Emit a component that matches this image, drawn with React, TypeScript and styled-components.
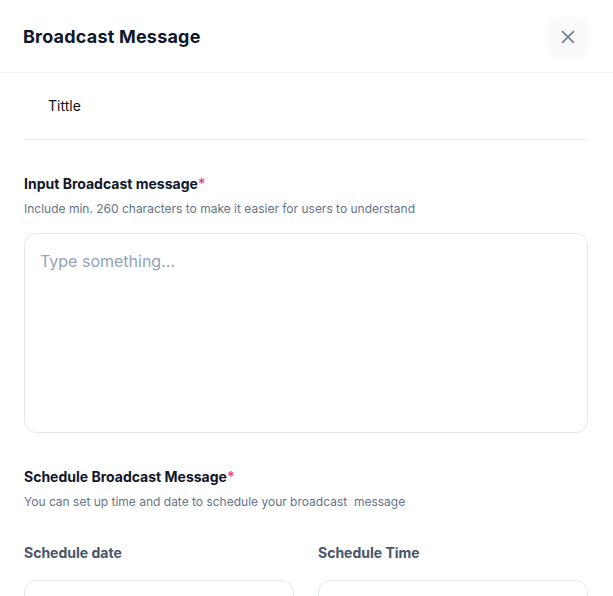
import React from "react";
import styled, { createGlobalStyle } from "styled-components";

const GlobalStyle = createGlobalStyle`
  html, body {
    margin: 0;
    padding: 0;
    background: #ffffff;
    font-family: Inter, "Noto Sans", sans-serif;
    -webkit-font-smoothing: antialiased;
  }
  * {
    box-sizing: border-box;
  }
`;

const Modal = styled.div`
  width: 613px;
  height: 596px;
  overflow: hidden;
  background: #ffffff;
`;

const Header = styled.div`
  height: 73px;
  display: flex;
  align-items: center;
  justify-content: space-between;
  padding: 0 25px 0 23px;
  border-bottom: 1px solid #eef0f3;
`;

const Title = styled.h1`
  margin: 0;
  font-size: 18px;
  font-weight: 700;
  color: #0f172a;
  letter-spacing: 0.2px;
`;

const CloseButton = styled.button`
  width: 40px;
  height: 40px;
  border: none;
  border-radius: 8px;
  background: #f8fafc;
  display: flex;
  align-items: center;
  justify-content: center;
  color: #64748b;
  cursor: pointer;
  padding: 0;
  margin-top: 2px;
`;

const Body = styled.div`
  padding: 0 25px 0 24px;
`;

const TabRow = styled.div`
  height: 67px;
  display: flex;
  align-items: center;
  padding: 0 0 2px 24px;
  border-bottom: 1px solid #eef0f3;
  font-size: 14px;
  color: #111111;
`;

const Section = styled.div<{ top: number }>`
  margin-top: ${({ top }) => top}px;
`;

const Label = styled.div`
  font-size: 14px;
  font-weight: 700;
  color: #0f172a;
  line-height: 20px;
`;

const Required = styled.span`
  color: #ec4899;
`;

const Hint = styled.div`
  margin-top: 7px;
  font-size: 12px;
  line-height: 16px;
  color: #64748b;
`;

const TextArea = styled.textarea`
  display: block;
  width: 100%;
  height: 200px;
  margin-top: 16px;
  border: 1px solid #e2e8f0;
  border-radius: 12px;
  padding: 17px 15px;
  font-family: Inter, "Noto Sans", sans-serif;
  font-size: 16px;
  color: #0f172a;
  resize: none;
  outline: none;
  &::placeholder {
    color: #94a3b8;
  }
`;

const Grid = styled.div`
  display: grid;
  grid-template-columns: 1fr 1fr;
  column-gap: 24px;
  margin-top: 33px;
`;

const Field = styled.div`
  display: flex;
  flex-direction: column;
`;

const FieldLabel = styled.div`
  font-size: 14px;
  font-weight: 700;
  color: #475569;
  line-height: 20px;
`;

const Input = styled.input`
  margin-top: 17px;
  height: 48px;
  border: 1px solid #e2e8f0;
  border-radius: 12px;
  padding: 0 15px;
  font-family: Inter, "Noto Sans", sans-serif;
  font-size: 14px;
  outline: none;
`;

export default function App() {
  return (
    <>
      <GlobalStyle />
      <Modal>
        <Header>
          <Title>Broadcast Message</Title>
          <CloseButton aria-label="Close">
            <svg width="16" height="16" viewBox="0 0 16 16" fill="none">
              <path
                d="M2.5 2.5L13.5 13.5M13.5 2.5L2.5 13.5"
                stroke="currentColor"
                strokeWidth="1.6"
                strokeLinecap="round"
              />
            </svg>
          </CloseButton>
        </Header>
        <Body>
          <TabRow>Tittle</TabRow>
          <Section top={34}>
            <Label>
              Input Broadcast message<Required>*</Required>
            </Label>
            <Hint>Include min. 260 characters to make it easier for users to understand</Hint>
            <TextArea placeholder="Type something..." />
          </Section>
          <Section top={34}>
            <Label>
              Schedule Broadcast Message<Required>*</Required>
            </Label>
            <Hint>You can set up time and date to schedule your broadcast&nbsp; message</Hint>
          </Section>
          <Grid>
            <Field>
              <FieldLabel>Schedule date</FieldLabel>
              <Input />
            </Field>
            <Field>
              <FieldLabel>Schedule Time</FieldLabel>
              <Input />
            </Field>
          </Grid>
        </Body>
      </Modal>
    </>
  );
}
